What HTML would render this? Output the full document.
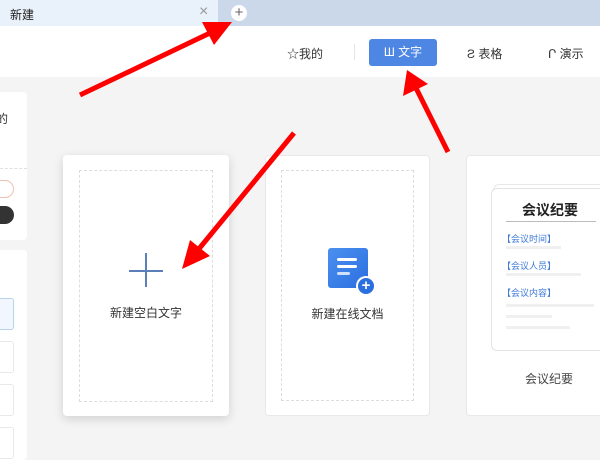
<!DOCTYPE html>
<html><head><meta charset="utf-8"><style>
*{margin:0;padding:0;box-sizing:border-box}
body{width:600px;height:450px;overflow:hidden;position:relative;background:#f4f4f5;font-family:"Liberation Sans","Noto Sans CJK SC",sans-serif;color:#333}
.abs{position:absolute}
</style></head><body>
<div class="abs" style="left:0;top:0;width:600px;height:26px;background:#cbd8e9"></div>
<div class="abs" style="left:0;top:0;width:218px;height:26px;background:#e9f1fb"></div>
<div class="abs" style="left:10px;top:6px;font-size:12px;color:#222">新建</div>
<div class="abs" style="left:199px;top:3px;font-size:16px;color:#999">×</div>
<div class="abs" style="left:231px;top:5px;width:16px;height:16px;border-radius:50%;background:#fff;color:#666;font-size:15px;line-height:15px;text-align:center">+</div>
<div class="abs" style="left:0;top:26px;width:600px;height:51px;background:#fff"></div>
<div class="abs" style="left:287px;top:45px;font-size:12px;color:#333">☆我的</div>
<div class="abs" style="left:354px;top:44px;width:1px;height:16px;background:#e5e5e5"></div>
<div class="abs" style="left:369px;top:39px;width:68px;height:27px;background:#4e86e4;border-radius:3px;color:#fff;font-size:12px;line-height:27px;text-align:center">Ш 文字</div>
<div class="abs" style="left:467px;top:45px;font-size:12px;color:#333">Ƨ 表格</div>
<div class="abs" style="left:548px;top:45px;font-size:12px;color:#333">Ր 演示</div>
<div class="abs" style="left:-10px;top:92px;width:37px;height:148px;background:#fff;border-radius:4px"></div>
<div class="abs" style="left:-4px;top:110px;font-size:12px">的</div>
<div class="abs" style="left:0;top:168px;width:27px;border-top:1px dashed #e0e0e0"></div>
<div class="abs" style="left:-10px;top:180px;width:24px;height:18px;border:1px solid #f0c0b0;border-radius:9px;background:#fff"></div>
<div class="abs" style="left:-10px;top:206px;width:24px;height:18px;background:#333;border-radius:9px"></div>
<div class="abs" style="left:-10px;top:250px;width:37px;height:210px;background:#fff;border-radius:4px"></div>
<div class="abs" style="left:-10px;top:298px;width:24px;height:32px;border:1px solid #b9d2ee;background:#f2f7fd;border-radius:3px"></div>
<div class="abs" style="left:-10px;top:341px;width:24px;height:32px;border:1px solid #e8e8e8;border-radius:3px"></div>
<div class="abs" style="left:-10px;top:384px;width:24px;height:32px;border:1px solid #e8e8e8;border-radius:3px"></div>
<div class="abs" style="left:-10px;top:427px;width:24px;height:32px;border:1px solid #e8e8e8;border-radius:3px"></div>

<div class="abs" style="left:63px;top:155px;width:166px;height:261px;background:#fff;border-radius:4px;box-shadow:0 3px 10px rgba(0,0,0,.15)"></div>
<div class="abs" style="left:79px;top:170px;width:134px;height:232px;border:1px dashed #ddd"></div>
<div class="abs" style="left:129px;top:270px;width:34px;height:1.5px;background:#5b7fb8"></div>
<div class="abs" style="left:145px;top:253px;width:1.5px;height:34px;background:#5b7fb8"></div>
<div class="abs" style="left:63px;top:304px;width:166px;text-align:center;font-size:12px;color:#333">新建空白文字</div>

<div class="abs" style="left:265px;top:155px;width:165px;height:261px;background:#fff;border-radius:4px;border:1px solid #e8e8e8"></div>
<div class="abs" style="left:281px;top:170px;width:133px;height:231px;border:1px dashed #ddd"></div>
<div class="abs" style="left:328px;top:248px;width:40px;height:40px;border-radius:3px;background:linear-gradient(135deg,#4b90f0,#2b6ee0)"></div>
<div class="abs" style="left:337px;top:258px;width:20px;height:3px;background:#fff;border-radius:2px"></div>
<div class="abs" style="left:337px;top:265px;width:20px;height:3px;background:#fff;border-radius:2px"></div>
<div class="abs" style="left:337px;top:272px;width:13px;height:3px;background:#cfe0fa;border-radius:2px"></div>
<div class="abs" style="left:356px;top:276px;width:20px;height:20px;border-radius:50%;background:#fff"></div>
<div class="abs" style="left:358px;top:278px;width:16px;height:16px;border-radius:50%;background:#2b6ee0;color:#fff;font-size:15px;line-height:15px;text-align:center;font-weight:bold">+</div>
<div class="abs" style="left:265px;top:305px;width:165px;text-align:center;font-size:12px;color:#333">新建在线文档</div>

<div class="abs" style="left:466px;top:155px;width:150px;height:261px;background:#fff;border-radius:4px;border:1px solid #e8e8e8"></div>
<div class="abs" style="left:493px;top:184px;width:120px;height:166px;border:1px solid #e8e8e8;border-radius:6px;background:#fff"></div>
<div class="abs" style="left:491px;top:188px;width:120px;height:163px;border:1px solid #e4e4e4;border-radius:6px;background:#fff"></div>
<div class="abs" style="left:522px;top:200px;font-size:14px;font-weight:bold;color:#222">会议纪要</div>
<div class="abs" style="left:506px;top:221px;width:90px;height:1px;background:#bbb"></div>
<div class="abs" style="left:502px;top:232px;font-size:9px;color:#3d7ad8">【会议时间】</div>
<div class="abs" style="left:506px;top:246px;width:55px;height:3px;background:#f0f0f0"></div>
<div class="abs" style="left:502px;top:259px;font-size:9px;color:#3d7ad8">【会议人员】</div>
<div class="abs" style="left:506px;top:273px;width:75px;height:3px;background:#f0f0f0"></div>
<div class="abs" style="left:502px;top:286px;font-size:9px;color:#3d7ad8">【会议内容】</div>
<div class="abs" style="left:506px;top:304px;width:88px;height:3px;background:#f0f0f0"></div>
<div class="abs" style="left:506px;top:315px;width:46px;height:3px;background:#f0f0f0"></div>
<div class="abs" style="left:506px;top:326px;width:64px;height:3px;background:#f0f0f0"></div>
<div class="abs" style="left:525px;top:370px;font-size:12px;color:#444">会议纪要</div>

<svg class="abs" style="left:0;top:0" width="600" height="450">
<g stroke="#f00" stroke-width="5" fill="#f00">
<line x1="80" y1="95" x2="210" y2="33"/>
<line x1="448" y1="152" x2="416" y2="88"/>
<line x1="294" y1="133" x2="198" y2="250"/>
</g>
<g fill="#f00">
<polygon points="232,22 202,22 214,45"/>
<polygon points="407,70 403,96 428,84"/>
<polygon points="182,269 190,240 210,256"/>
</g>
</svg>
</body></html>
